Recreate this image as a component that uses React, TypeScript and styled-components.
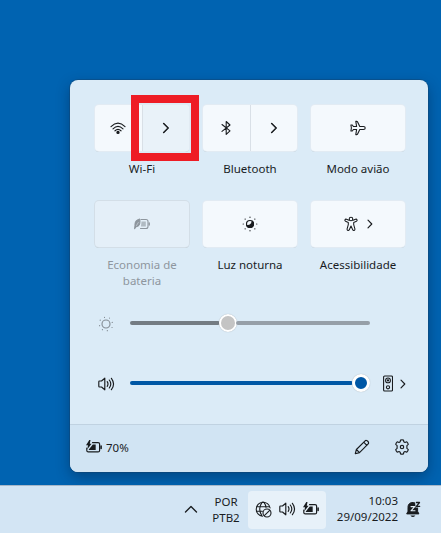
import React from "react";
import styled, { createGlobalStyle } from "styled-components";

const Global = createGlobalStyle`
  * { box-sizing: border-box; }
  body { margin: 0; background: #0063b1; overflow: hidden; }
  svg { display: block; flex: none; fill: none; stroke: currentColor; stroke-linecap: round; stroke-linejoin: round; }
`;

const Desktop = styled.div`
  width: 441px;
  height: 533px;
  display: flex;
  flex-direction: column;
  justify-content: space-between;
  background: #0063b1;
  color: #191c1f;
  font: 11.5px/16px "Noto Sans", "Open Sans", sans-serif;
  overflow: hidden;
`;

const Panel = styled.section`
  width: 358px;
  height: 392px;
  margin: 80px 0 0 70px;
  display: flex;
  flex-direction: column;
  border-radius: 8px;
  background: #dbebf7;
  box-shadow: 0 0 0 1px rgba(20, 65, 105, 0.4), 0 5px 14px rgba(0, 20, 50, 0.38);
  overflow: hidden;
`;

const Tiles = styled.div`
  display: grid;
  grid-template-columns: repeat(3, 94px);
  grid-auto-rows: 96px;
  column-gap: 14px;
  padding: 25px 0 0 25px;
`;

const TileCell = styled.div`
  display: flex;
  flex-direction: column;
  align-items: center;
`;

const Tile = styled.div<{ $disabled?: boolean }>`
  width: 94px;
  height: 46px;
  display: flex;
  align-items: stretch;
  border-radius: 4px;
  background: ${(p) => (p.$disabled ? "#e4eff8" : "#f4f9fd")};
  color: ${(p) => (p.$disabled ? "#8e969e" : "#191c1f")};
  box-shadow: 0 0 0 1px ${(p) => (p.$disabled ? "#d3dee7" : "#e2ebf3")}, 0 1px 0 ${(p) => (p.$disabled ? "#b8c3cc" : "#bac5cf")};
`;

const TileHalf = styled.div<{ $divided?: boolean; $tinted?: boolean }>`
  flex: 1;
  display: flex;
  align-items: center;
  justify-content: center;
  gap: 9px;
  border-left: ${(p) => (p.$divided ? "1px solid #d9e0e7" : "0")};
  border-radius: ${(p) => (p.$tinted ? "0 4px 4px 0" : "0")};
  background: ${(p) => (p.$tinted ? "#e9f2f9" : "transparent")};
`;

const Highlight = styled.div`
  position: absolute;
  left: 131px;
  top: 95px;
  width: 68px;
  height: 66px;
  border: 8px solid #ee1c25;
`;

const TileLabel = styled.div<{ $disabled?: boolean }>`
  width: 90px;
  margin-top: 10px;
  text-align: center;
  color: ${(p) => (p.$disabled ? "#8e969e" : "#191c1f")};
`;

const Sliders = styled.div`
  padding-top: 8px;
  display: flex;
  flex-direction: column;
  gap: 24px;
`;

const SliderRow = styled.div<{ $muted?: boolean }>`
  height: 36px;
  display: grid;
  grid-template-columns: 16px 240px 32px;
  align-items: center;
  padding-left: 28px;
  column-gap: 16px;
  color: ${(p) => (p.$muted ? "#858e96" : "#191c1f")};
`;

const SliderIcon = styled.div`
  margin-top: 1px;
`;

const Track = styled.div`
  height: 18px;
  display: flex;
  align-items: center;
  margin-top: -1px;
`;

const Bar = styled.div<{ $color: string; $width?: number }>`
  flex: ${(p) => (p.$width ? `0 0 ${p.$width}px` : "1")};
  height: 4px;
  border-radius: 2px;
  background: ${(p) => p.$color};
`;

const Thumb = styled.div<{ $color: string; $ring: number }>`
  flex: none;
  width: 18px;
  height: 18px;
  margin: 0 -1px;
  border: ${(p) => p.$ring}px solid #fff;
  border-radius: 50%;
  background: ${(p) => p.$color};
  box-shadow: 0 0 1px rgba(0, 0, 0, 0.3);
`;

const OutputPicker = styled.div`
  display: flex;
  align-items: center;
  gap: 7px;
  margin: 1px 0 0 -3px;
`;

const Footer = styled.footer`
  height: 48px;
  margin-top: auto;
  padding: 0 18px 2px 16px;
  display: flex;
  align-items: center;
  justify-content: space-between;
  border-top: 1px solid #c0d2e1;
  background: #d1e4f3;
`;

const Battery = styled.div`
  display: flex;
  align-items: center;
  gap: 4px;
  svg { margin-bottom: 2px; }
`;

const Actions = styled.div`
  display: flex;
  gap: 24px;
  margin-bottom: 1px;
`;

const Taskbar = styled.div`
  height: 48px;
  flex: none;
  display: flex;
  align-items: center;
  padding: 0 20px 0 184px;
  border-top: 1px solid #a7b7c8;
  background: #d3e5f4;
`;

const Language = styled.div`
  width: 40px;
  margin: 1px 0 0 8px;
  text-align: center;
`;

const Tray = styled.div`
  width: 78px;
  height: 38px;
  margin-left: 2px;
  display: flex;
  align-items: center;
  justify-content: center;
  gap: 7px;
  border-radius: 4px;
  background: #e7f1f9;
  svg { margin-top: -1px; }
`;

const Clock = styled.div`
  width: 72px;
  margin-top: -1px;
  text-align: right;
`;

const BellSlot = styled.div`
  margin-left: 8px;
`;

const Chevron = () => (
  <svg width="8" height="12" viewBox="0 0 8 12" strokeWidth="1.6">
    <path d="M1.7 1.5 6.2 6l-4.5 4.5" />
  </svg>
);

const SmallChevron = () => (
  <svg width="6" height="10" viewBox="0 0 6 10" strokeWidth="1.15">
    <path d="M1 1.2 4.8 5 1 8.8" />
  </svg>
);

const Wifi = () => (
  <svg width="16" height="16" viewBox="0 0 16 16" strokeWidth="1.15">
    <path d="M1 6.6Q8-0.2 15 6.6M3 8.8q5-4.8 10 0M5 10.8q3-2.7 6 0" />
    <circle cx="8" cy="12.4" r="1.1" fill="currentColor" />
  </svg>
);

const Bluetooth = () => (
  <svg width="16" height="16" viewBox="0 0 16 16" strokeWidth="1.1">
    <path d="m4 4.5 8 6.4-3.8 3.5V1.5L12 5l-8 6.4" />
  </svg>
);

const Plane = () => (
  <svg width="16" height="16" viewBox="0 0 16 16" strokeWidth="1.1">
    <path d="M9.8 6.5h3.7q1.7 0 1.7 1.5t-1.7 1.5H9.8L7.6 14q-.3.6-1 .6h-.8L6.6 9.5H3.4L2.3 11H.9l.5-3-.5-3h1.4l1.1 1.5h3.2l-.8-5.1h.8q.7 0 1 .6z" />
  </svg>
);

const LeafBattery = () => (
  <svg width="16" height="16" viewBox="0 0 16 16" strokeWidth="1.1">
    <path d="M7 3.5h5q2 0 2 2v5q0 2-2 2H6.5" />
    <path d="M15.2 7v2" strokeWidth="1.4" />
    <path d="M7.5 5.5h4.3v5H7z" fill="currentColor" opacity=".6" stroke="none" />
    <path d="M5.7 3C2 4 .7 6 1 9.5l-.4 3.2 1.5-2C5.2 10.3 6.5 7.6 5.7 3z" fill="currentColor" />
    <path d="m2.5 9.5 1.8-3" stroke="#e4eff8" strokeWidth=".5" />
  </svg>
);

const NightLight = () => (
  <svg width="16" height="16" viewBox="0 0 16 16" strokeWidth="1.2">
    <path d="M8 1.2v.1M8 14.7v.1M1.2 8h.1M14.7 8h.1M3.1 3.1h.1M12.8 3.1h.1M3.1 12.8h.1M12.8 12.8h.1" />
    <circle cx="8" cy="8" r="3.5" />
    <path d="M10.2 5.3a3.5 3.5 0 1 1-5.4 4.2c2.8.7 5.2-1.2 5.4-4.2z" fill="currentColor" />
  </svg>
);

const Accessibility = () => (
  <svg width="14" height="16" viewBox="0 0 14 16" strokeWidth="1.05">
    <circle cx="7" cy="3" r="1.8" />
    <path d="M5 4.3 2.5 3.2C.9 2.8.3 4.6 1.6 5.3l2.7 1.2v2.1l-1.2 4.2c-.3 1.8 1.6 2.2 2.2.9L7 10l1.7 3.7c.6 1.3 2.5.9 2.2-.9L9.7 8.6V6.5l2.7-1.2c1.3-.7.7-2.5-.9-2.1L9 4.3" />
  </svg>
);

const Sun = () => (
  <svg width="16" height="16" viewBox="0 0 16 16" strokeWidth="1.2">
    <circle cx="8" cy="8" r="4" strokeWidth="1.15" />
    <path d="M6.5 1.4v.1M11.5 2v.1M2.2 4.2h.1M14.2 6.4h.1M1.5 9.7h.1M14 11.5h.1M4.4 13.7h.1M9.3 14.7h.1" />
  </svg>
);

const Speaker = () => (
  <svg width="17" height="16" viewBox="0 0 17 16" strokeWidth="1.15">
    <path d="M.8 5.7q0-.7.7-.7h2l3.3-2.8v11.6L3.5 11h-2q-.7 0-.7-.7z" />
    <path d="M9.2 5.7q1.6 2.3 0 4.6M11.3 4q3 4 0 8M13.4 2.3q4.3 5.7 0 11.4" />
  </svg>
);

const SpeakerDevice = () => (
  <svg width="10" height="17" viewBox="0 0 10 17" strokeWidth="1.1">
    <rect x=".6" y="1" width="8.9" height="15" rx="1" />
    <circle cx="5" cy="5.4" r="2.4" />
    <circle cx="5" cy="5.4" r=".6" />
    <circle cx="5" cy="12.3" r="1.6" />
  </svg>
);

const ChargingBattery = () => (
  <svg width="16" height="14" viewBox="0 0 16 14" strokeWidth="1.2">
    <path d="M6.5 2.6h5.6q1.5 0 1.5 1.5v6.3q0 1.5-1.5 1.5H2.3Q.8 11.9.8 10.4V8" />
    <path d="M15.1 6v2.4" strokeWidth="1.6" />
    <path d="M6.8 4.5h2.9v5.6H2.8V9.4z" fill="currentColor" stroke="none" />
    <path d="M3.3 0 0 5.3h2L1.3 9.2 5.6 3.8H3.8L4.5 0z" fill="currentColor" stroke="none" />
  </svg>
);

const Pencil = () => (
  <svg width="16" height="16" viewBox="0 0 16 16" strokeWidth="1.15">
    <path d="m1.3 14.7 1.1-4.2 8.7-8.7c1.5-1.5 4.6 1.6 3.1 3.1l-8.7 8.7zM9.7 3.2l3.1 3.1M2.4 10.5l3.1 3.1" />
  </svg>
);

const Gear = () => (
  <svg width="16" height="16" viewBox="0 0 16 16" strokeWidth="1.15">
    <path d="M6.5 1q1.5-.4 3 0l.3 1.8 1.2.7 1.8-.7q1.1 1.1 1.5 2.6L12.9 6.6v2.8l1.4 1.2q-.4 1.5-1.5 2.6l-1.8-.7-1.2.7-.3 1.8q-1.5.4-3 0l-.3-1.8-1.2-.7-1.8.7q-1.1-1.1-1.5-2.6l1.4-1.2V6.6L1.7 5.4q.4-1.5 1.5-2.6l1.8.7 1.2-.7z" />
    <circle cx="8" cy="8" r="1.7" />
  </svg>
);

const ChevronUp = () => (
  <svg width="14" height="10" viewBox="0 0 14 10" strokeWidth="1.35">
    <path d="m1.5 7 5.5-5.5L12.5 7" />
  </svg>
);

const GlobeOff = () => (
  <svg width="17" height="17" viewBox="0 0 17 17" strokeWidth="1.1">
    <path d="M7.5 15.2A7 7 0 1 1 15.1 7M1.5 5.8h13M1.4 10.3h6M7 15Q2.4 8 7 1.4l1-.3 1 .3q1.7 2.3 2 5" />
    <circle cx="12" cy="12" r="4" />
    <path d="m9.3 14.7 5.4-5.4" />
  </svg>
);

const Bell = () => (
  <svg width="15" height="17" viewBox="0 0 15 17" strokeWidth="1">
    <path d="M8.5 1.8C4.3.5 2 3 2 6.3v4L.7 12.9h12.2l-1.3-2.6v-4z" fill="currentColor" />
    <path d="M4.4 14.4h5q-2.5 3.4-5 0z" fill="currentColor" stroke="none" />
    <path d="M9 .3h6v6.2H9.6z" fill="#d3e5f4" stroke="none" />
    <path d="M10.4 1.5h3.1l-3.1 3.8h3.3" strokeWidth="1.3" />
    <path d="M5 5.6h3.7L5 9.8h4" stroke="#e4eff8" strokeWidth="1.1" />
  </svg>
);

export default function App() {
  return (
    <Desktop>
      <Global />
      <Panel>
        <Tiles>
          <TileCell>
            <Tile>
              <TileHalf><Wifi /></TileHalf>
              <TileHalf $divided $tinted><Chevron /></TileHalf>
            </Tile>
            <TileLabel>Wi-Fi</TileLabel>
          </TileCell>
          <TileCell>
            <Tile>
              <TileHalf><Bluetooth /></TileHalf>
              <TileHalf $divided><Chevron /></TileHalf>
            </Tile>
            <TileLabel>Bluetooth</TileLabel>
          </TileCell>
          <TileCell>
            <Tile><TileHalf><Plane /></TileHalf></Tile>
            <TileLabel>Modo avião</TileLabel>
          </TileCell>
          <TileCell>
            <Tile $disabled><TileHalf><LeafBattery /></TileHalf></Tile>
            <TileLabel $disabled>Economia de bateria</TileLabel>
          </TileCell>
          <TileCell>
            <Tile><TileHalf><NightLight /></TileHalf></Tile>
            <TileLabel>Luz noturna</TileLabel>
          </TileCell>
          <TileCell>
            <Tile><TileHalf><Accessibility /><SmallChevron /></TileHalf></Tile>
            <TileLabel>Acessibilidade</TileLabel>
          </TileCell>
        </Tiles>
        <Sliders>
          <SliderRow $muted>
            <SliderIcon><Sun /></SliderIcon>
            <Track>
              <Bar $color="#747c83" $width={90} />
              <Thumb $color="#c4c4c4" $ring={2} />
              <Bar $color="#969fa8" />
            </Track>
          </SliderRow>
          <SliderRow>
            <SliderIcon><Speaker /></SliderIcon>
            <Track>
              <Bar $color="#0057a5" $width={223} />
              <Thumb $color="#0057a5" $ring={3.5} />
            </Track>
            <OutputPicker><SpeakerDevice /><SmallChevron /></OutputPicker>
          </SliderRow>
        </Sliders>
        <Footer>
          <Battery><ChargingBattery /><span>70%</span></Battery>
          <Actions><Pencil /><Gear /></Actions>
        </Footer>
      </Panel>
      <Taskbar>
        <ChevronUp />
        <Language>POR<br />PTB2</Language>
        <Tray><GlobeOff /><Speaker /><ChargingBattery /></Tray>
        <Clock>10:03<br />29/09/2022</Clock>
        <BellSlot><Bell /></BellSlot>
      </Taskbar>
      <Highlight />
    </Desktop>
  );
}
